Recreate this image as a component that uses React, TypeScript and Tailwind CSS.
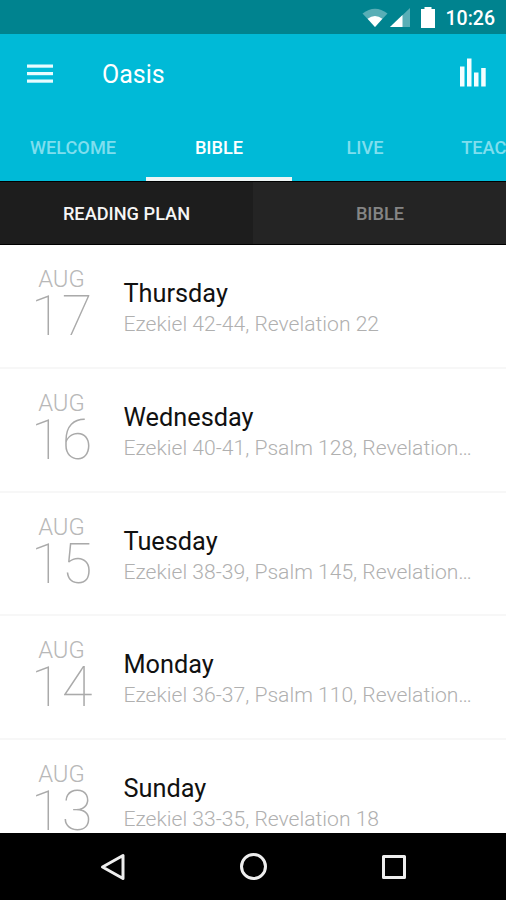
import React from "react";

const days = [
  { date: "17", name: "Thursday", reading: "Ezekiel 42-44, Revelation 22" },
  { date: "16", name: "Wednesday", reading: "Ezekiel 40-41, Psalm 128, Revelation…" },
  { date: "15", name: "Tuesday", reading: "Ezekiel 38-39, Psalm 145, Revelation…" },
  { date: "14", name: "Monday", reading: "Ezekiel 36-37, Psalm 110, Revelation…" },
  { date: "13", name: "Sunday", reading: "Ezekiel 33-35, Revelation 18" },
];

const tabs = ["WELCOME", "BIBLE", "LIVE", "TEACHINGS"];

function StatusBar() {
  return (
    <div className="flex h-[34px] shrink-0 items-center justify-end bg-[#00838f] pr-[11px] text-white">
      <svg width="26" height="20" viewBox="0 0 26 20" className="mt-0.5">
        <path d="M0.5 5.5 Q13 -4 25.5 5.5 L13 19 Z" fill="#fff" opacity="0.35" />
        <path d="M5.6 10.8 Q13 5.2 20.4 10.8 L13 19 Z" fill="#fff" />
      </svg>
      <svg width="20" height="20" viewBox="0 0 20 20" className="mt-0.5 ml-0.5">
        <path d="M0 19 L20 0 V19 Z" fill="#fff" opacity="0.35" />
        <path d="M0 19 L12.5 7 V19 Z" fill="#fff" />
      </svg>
      <svg width="16" height="22" viewBox="0 0 16 22" className="ml-[10px]">
        <path d="M4.5 1 H11.5 V3 H15 V22 H1 V3 H4.5 Z" fill="#fff" />
      </svg>
      <span className="ml-[10px] mt-[3px] text-[19.5px] leading-6 font-medium">10:26</span>
    </div>
  );
}

function Header() {
  return (
    <header className="h-[147px] shrink-0 bg-[#00bad7] text-white">
      <div className="flex h-20 items-center pl-[27px] pr-[19px]">
        <svg width="26" height="20" viewBox="0 0 26 20" fill="#e8fcff">
          <rect y="0.5" width="26" height="3.2" />
          <rect y="8" width="26" height="3.2" />
          <rect y="15.5" width="26" height="3.2" />
        </svg>
        <h1 className="ml-[49px] mt-0.5 text-[25px] leading-8">Oasis</h1>
        <svg width="27" height="29" viewBox="0 0 27 29" fill="#f4feff" className="ml-auto -mt-[3px]">
          <rect x="0" y="8.5" width="4.5" height="20" />
          <rect x="7" y="0.5" width="4.5" height="28" />
          <rect x="14" y="14.5" width="4.5" height="14" />
          <rect x="21.2" y="10" width="4.5" height="18.5" />
        </svg>
      </div>
      <nav className="flex h-[67px] overflow-hidden">
        {tabs.map((tab) => (
          <div
            key={tab}
            className={
              tab === "BIBLE"
                ? "flex w-[146px] shrink-0 items-center justify-center border-b-4 border-[#eef5f5] pt-1 text-[18.2px] font-medium"
                : "flex w-[146px] shrink-0 items-center justify-center border-b-4 border-transparent pt-1 text-[18.2px] font-medium text-[#7fdeee]"
            }
          >
            {tab}
          </div>
        ))}
      </nav>
    </header>
  );
}

function NavBar() {
  return (
    <div className="flex h-[67px] shrink-0 items-center justify-center gap-[112px] bg-black">
      <svg width="28" height="28" viewBox="0 0 28 28" fill="none" stroke="#eee" strokeWidth="3" strokeLinejoin="round">
        <path d="M24 2.5 V25.5 L3.5 14 Z" />
      </svg>
      <svg width="28" height="28" viewBox="0 0 28 28" fill="none" stroke="#eee" strokeWidth="3">
        <circle cx="14.5" cy="13.5" r="12" />
      </svg>
      <svg width="28" height="28" viewBox="0 0 28 28" fill="none" stroke="#eee" strokeWidth="3" strokeLinejoin="round">
        <rect x="4.5" y="3.5" width="21" height="21" />
      </svg>
    </div>
  );
}

export default function App() {
  return (
    <main className="flex h-[900px] w-[506px] flex-col overflow-hidden bg-white font-[Roboto,sans-serif]">
      <StatusBar />
      <Header />
      <div className="grid h-16 shrink-0 grid-cols-2 border-y border-black text-[18.2px] font-medium">
        <div className="flex items-center justify-center bg-[#1d1d1d] pt-0.5 text-[#f5f5f5]">READING PLAN</div>
        <div className="flex items-center justify-center bg-[#242424] pt-0.5 pl-px text-[#858585]">BIBLE</div>
      </div>

      <div className="min-h-0 flex-1 overflow-hidden">
        {days.map((day) => (
          <div key={day.date} className="flex h-[123.8px] border-b-2 border-[#f7f7f7] pl-[31px]">
            <div className="w-[61px] shrink-0 pt-[20px] text-center text-[#b8b8b8]">
              <div className="text-[23.8px] leading-7 font-light">AUG</div>
              <div className="pt-px text-[56px] leading-[44px] font-thin text-[#aaa]">{day.date}</div>
            </div>
            <div className="ml-[31.5px] min-w-0 flex-1 pt-[33px]">
              <div className="text-[25.3px] leading-8 text-[#111]">{day.name}</div>
              <div className="-mt-px whitespace-nowrap text-[21.1px] leading-[30px] font-light text-[#b0b0b0]">{day.reading}</div>
            </div>
          </div>
        ))}
      </div>

      <NavBar />
    </main>
  );
}
